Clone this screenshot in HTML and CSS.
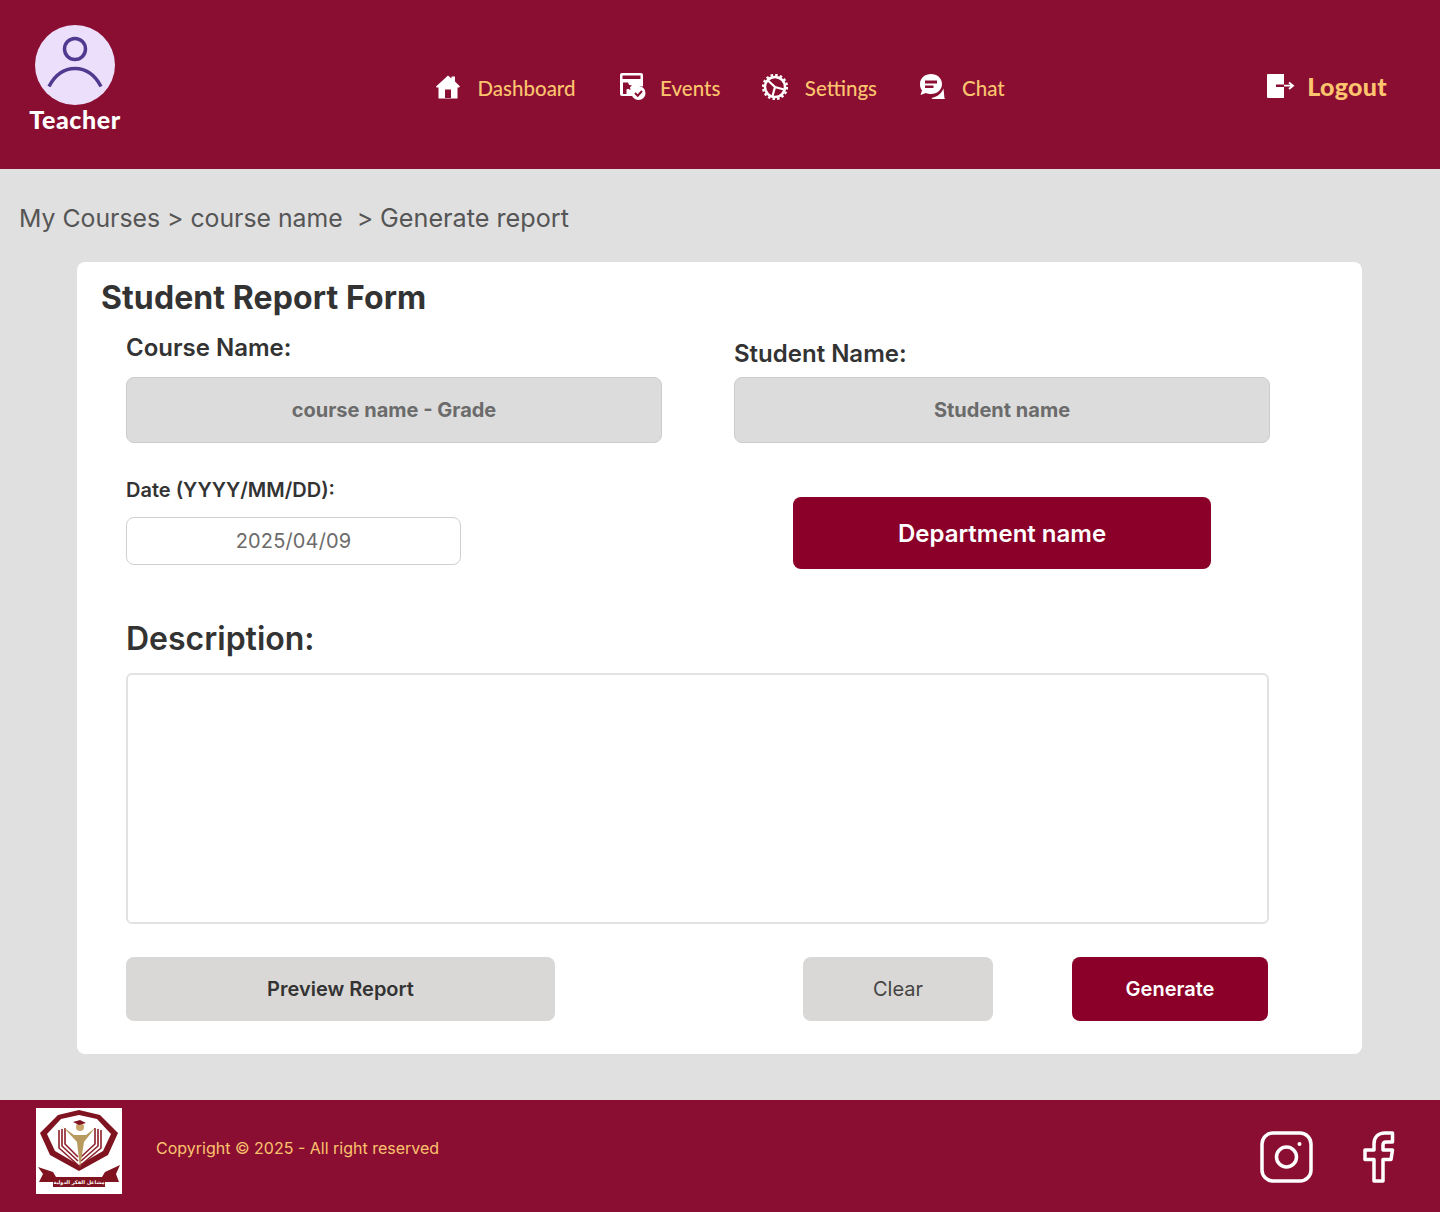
FILE: index.html
```html
<!DOCTYPE html>
<html lang="en">
<head>
<meta charset="utf-8">
<title>Student Report Form</title>
<link rel="stylesheet" href="styles.css">
</head>
<body>
<header class="topbar">
  <div class="profile">
    <svg class="avatar" viewBox="0 0 80 80" width="80" height="80" aria-hidden="true">
      <circle cx="40" cy="40" r="40" fill="#ecdffb"/>
      <circle cx="40" cy="24" r="10.500" fill="none" stroke="#4e3a8f" stroke-width="3.500"/>
      <path d="M14 61.500C20 50 29 43.500 40 43.500S60 50 66 61.500" fill="none" stroke="#4e3a8f" stroke-width="3.500"/>
    </svg>
    <span class="role">Teacher</span>
  </div>
  <nav class="nav">
    <a class="nav-item nav-dash">
      <svg width="24" height="24" viewBox="0 0 24 24" aria-hidden="true"><path fill="#fff" d="M12 .5 15.500 3.500V1.500H19V6.500L24 11.500 23 12.500H21.500V23.500H2.500V12.500H.5L0 11.500ZM9 14.500V23H15V14.500Z"/></svg>
      <span class="nav-text">Dashboard</span>
    </a>
    <a class="nav-item nav-events">
      <svg width="28" height="28" viewBox="0 0 28 28" aria-hidden="true"><path fill="#fff" fill-rule="evenodd" d="M2 0H21Q23 0 23 2V13.500A8 8 0 0 0 13 23H2Q0 23 0 21V2Q0 0 2 0ZM2.500 2.500V6H20.500V2.500ZM8 9.500 9.200 12 12 12.400 10 14.300 10.500 17 8 15.700 6.500 16.500V21H3V9.500Z"/><circle cx="18.500" cy="20" r="7" fill="#fff"/><path d="M15 20l2.700 2.700L22 18" fill="none" stroke="#8a0e32" stroke-width="2"/></svg>
      <span class="nav-text">Events</span>
    </a>
    <a class="nav-item nav-settings">
      <svg width="26" height="26" viewBox="0 0 26 26" aria-hidden="true"><circle cx="13" cy="13" r="10" fill="none" stroke="#fff" stroke-width="2.500"/><circle cx="13" cy="13" r="12" fill="none" stroke="#fff" stroke-width="2.200" stroke-dasharray="2.500 2.200"/><path d="M6 6.500 13 13 22 15.500M13 13 10.500 22" fill="none" stroke="#fff" stroke-width="2.200"/></svg>
      <span class="nav-text">Settings</span>
    </a>
    <a class="nav-item nav-chat">
      <svg width="27" height="26" viewBox="0 0 27 26" aria-hidden="true"><path fill="#fff" fill-rule="evenodd" d="M12 0C18 0 23 4 23 10S18 20 12 20C10 20 8.500 19.700 7 19L1.500 21 3 16.500C1.500 14.800 1 12.500 1 10 1 4 6 0 12 0ZM6 6.500V9.500H18V6.500ZM6 11.500V14H14.500V11.500Z"/><path fill="#fff" d="M24.500 14.500 25.500 24.500 26.500 25H14.500C13.500 25 13 24.800 12.500 24 18 23 22 20 24.500 14.500Z"/></svg>
      <span class="nav-text">Chat</span>
    </a>
  </nav>
  <a class="logout">
    <svg width="28" height="24" viewBox="0 0 28 24" aria-hidden="true"><path fill="#fff" d="M1 0H17V10.500H9V13H17V24H1Q0 24 0 23V1Q0 0 1 0Z"/><path d="M17 11.700H25M22 8.500 26 11.700 22 15" fill="none" stroke="#fff" stroke-width="1.800"/></svg>
    <span>Logout</span>
  </a>
</header>

<main class="content">
  <p class="crumbs">My Courses &gt; course name&nbsp; &gt; <span class="crumb-last">Generate report</span></p>
  <section class="card">
    <h1 class="card-title">Student Report Form</h1>
    <div class="form">
      <div class="top-grid">
        <div class="col">
          <div class="label label-course">Course Name:</div>
          <div class="readonly">course name - Grade</div>
        </div>
        <div class="col">
          <div class="label label-student">Student Name:</div>
          <div class="readonly">Student name</div>
        </div>
      </div>
      <div class="mid-grid">
        <div>
          <div class="label-small">Date (YYYY/MM/DD):</div>
          <div class="date">2025/04/09</div>
        </div>
        <div class="dept-wrap"><div class="dept">Department name</div></div>
      </div>
      <h2 class="desc-title">Description:</h2>
      <div class="textarea"></div>
      <div class="actions">
        <button class="btn btn-preview">Preview Report</button>
        <button class="btn btn-clear">Clear</button>
        <button class="btn btn-generate">Generate</button>
      </div>
    </div>
  </section>
</main>

<footer class="footer">
  <div class="logo">
    <svg viewBox="0 0 86 86" width="86" height="86" aria-hidden="true">
      <rect width="86" height="86" fill="#fff"/>
      <path d="M43 2 64 7 82 25 72 47 43 63 14 47 4 25 22 7Z" fill="#7f1420"/>
      <path d="M43 7 61 11 75 26 67 43 43 57 19 43 11 26 25 11Z" fill="#fff"/>
      <path d="M23 22V40L42 57M26 21V38L42 53M29 20V36L42 49" fill="none" stroke="#8c1f28" stroke-width="1.600"/>
      <path d="M65 22V40L45 57M62 21V38L45 53M59 20V36L45 49" fill="none" stroke="#8c1f28" stroke-width="1.600"/>
      <path d="M27 19 38 27H50L59 20 48 34 44 60 41 34Z" fill="#b89a5e"/>
      <circle cx="44" cy="19" r="4" fill="#caa46a"/>
      <path d="M37 14 44 12 50 15 43 17Z" fill="#7f1420"/>
      <path d="M2 59 17 64 20 69H66L69 64 84 57 80 66 83 74 69 74V79H17V74L3 74 7 66Z" fill="#7f1420"/>
      <text x="43" y="76" class="logo-text" text-anchor="middle" direction="rtl">مشاعل الفكر الدولية</text>
    </svg>
  </div>
  <p class="copyright">Copyright © 2025 - All right reserved</p>
  <div class="social">
    <svg width="54" height="52" viewBox="0 0 54 52" aria-hidden="true"><rect x="2" y="2" width="49" height="48" rx="11" fill="none" stroke="#fff" stroke-width="3.500"/><circle cx="26.500" cy="26" r="10" fill="none" stroke="#fff" stroke-width="3.500"/><circle cx="39.500" cy="13" r="2" fill="#fff"/></svg>
    <svg width="32" height="52" viewBox="0 0 32 52" aria-hidden="true"><path d="M29.500 2H22C15 2 11 6.500 11 13V19H2V28.500H11V50H20V28.500H28L29.500 19H20V14C20 12 21 11 23 11H29.500Z" fill="none" stroke="#fff" stroke-width="3.500" stroke-linejoin="round"/></svg>
  </div>
</footer>
</body>
</html>
```
FILE: styles.css
```css
* { box-sizing: border-box; }
html, body { margin: 0; padding: 0; }
body {
  width: 1440px;
  min-height: 1212px;
  display: flex;
  flex-direction: column;
  background: #e0e0e0;
  font-family: Inter, "Liberation Sans", sans-serif;
}
.topbar {
  height: 169px;
  background: #8a0e32;
  display: flex;
  align-items: flex-start;
  padding: 25px 53px 0 30px;
}
.profile { width: 90px; display: flex; flex-direction: column; align-items: center; }
.avatar { display: block; }
.role {
  font-family: Lato, sans-serif;
  font-weight: 900;
  font-size: 25px;
  letter-spacing: .6px;
  line-height: 28px;
  color: #fff;
}
.nav {
  display: flex;
  align-items: center;
  margin-left: 316px;
  margin-top: 46px;
  height: 32px;
}
.nav-item {
  display: flex;
  align-items: center;
  font-family: Lato, sans-serif;
  font-size: 20.500px;
  font-weight: 500;
  color: #fcc46e;
}
.nav-text { padding-top: 2px; }
.nav-dash { gap: 17.500px; margin-right: 44px; }
.nav-events { gap: 12.500px; margin-right: 42px; }
.nav-settings { gap: 16.500px; margin-right: 42px; }
.nav-chat { gap: 16px; }
.logout {
  display: flex;
  align-items: center;
  gap: 12px;
  margin-left: auto;
  margin-top: 46px;
  font-family: Lato, sans-serif;
  font-weight: 900;
  font-size: 25px;
  letter-spacing: .3px;
  color: #fcc46e;
}
.content { flex: 1; display: flex; flex-direction: column; }
.crumbs {
  margin: 34px 0 0 19px;
  font-size: 24.800px;
  line-height: 30px;
  color: #555;
}
.crumb-last { font-size: 25.200px; }
.card {
  margin: 29px 0 0 77px;
  width: 1285px;
  height: 792px;
  background: #fff;
  border-radius: 8px;
  padding: 16px 0 0 24px;
}
.card-title {
  margin: 0;
  font-size: 32px;
  line-height: 40px;
  font-weight: 700;
  letter-spacing: .1px;
  color: #333;
}
.form { padding-left: 25px; width: 1169px; }
.top-grid { display: grid; grid-template-columns: 536px 536px; column-gap: 72px; margin-top: 12px; height: 113px; }
.col { display: flex; flex-direction: column; height: 113px; justify-content: flex-end; }
.label { font-size: 24px; font-weight: 600; color: #333; }
.label-course { line-height: 30px; margin-bottom: 14px; }
.label-student { line-height: 30px; margin-bottom: 8px; }
.readonly {
  height: 66px;
  background: #dcdcdc;
  border: 1px solid #ccc;
  border-radius: 8px;
  display: flex;
  align-items: center;
  justify-content: center;
  font-size: 20px;
  font-weight: 700;
  color: #6b6b6b;
}
.mid-grid { display: grid; grid-template-columns: 536px 536px; column-gap: 72px; margin-top: 32px; }
.label-small { font-size: 20px; font-weight: 600; line-height: 30px; color: #333; }
.date {
  margin-top: 12px;
  width: 335px;
  height: 48px;
  background: #fff;
  border: 1px solid #d0d0d0;
  border-radius: 8px;
  display: flex;
  align-items: center;
  justify-content: center;
  font-size: 20px;
  letter-spacing: .15px;
  color: #6b6b6b;
}
.dept-wrap { display: flex; justify-content: center; padding-top: 22px; }
.dept {
  width: 418px;
  height: 72px;
  background: #8b0028;
  border-radius: 8px;
  display: flex;
  align-items: center;
  justify-content: center;
  font-size: 24px;
  font-weight: 600;
  color: #fff;
}
.desc-title {
  margin: 50px 0 14px;
  font-size: 32px;
  line-height: 40px;
  font-weight: 600;
  color: #333;
}
.textarea {
  width: 1143px;
  height: 251px;
  background: #fff;
  border: 2px solid #e2e2e2;
  border-radius: 6px;
}
.actions { display: flex; margin-top: 33px; width: 1142px; }
.btn {
  height: 64px;
  border: 0;
  border-radius: 8px;
  font-family: Inter, sans-serif;
  font-size: 20px;
  padding: 0;
}
.btn-preview { width: 429px; background: #d9d8d6; color: #333; font-weight: 600; }
.btn-clear { width: 190px; margin-left: 248px; background: #d9d8d6; color: #444; font-weight: 400; }
.btn-generate { width: 196px; margin-left: 79px; background: #8b0028; color: #fff; font-weight: 600; }
.footer {
  height: 112px;
  background: #8a0e32;
  display: flex;
  align-items: flex-start;
  padding: 8px 45px 0 36px;
}
.logo { width: 86px; height: 86px; }
.logo svg { display: block; }
.logo-text { font-family: "DejaVu Sans", sans-serif; font-size: 5px; font-weight: 700; fill: #fff; }
.copyright {
  margin: 31px 0 0 34px;
  font-size: 16px;
  line-height: 19px;
  color: #fcc46e;
}
.social { margin: 23px 0 0 auto; display: flex; align-items: center; gap: 49px; }
.social svg { display: block; }
```
